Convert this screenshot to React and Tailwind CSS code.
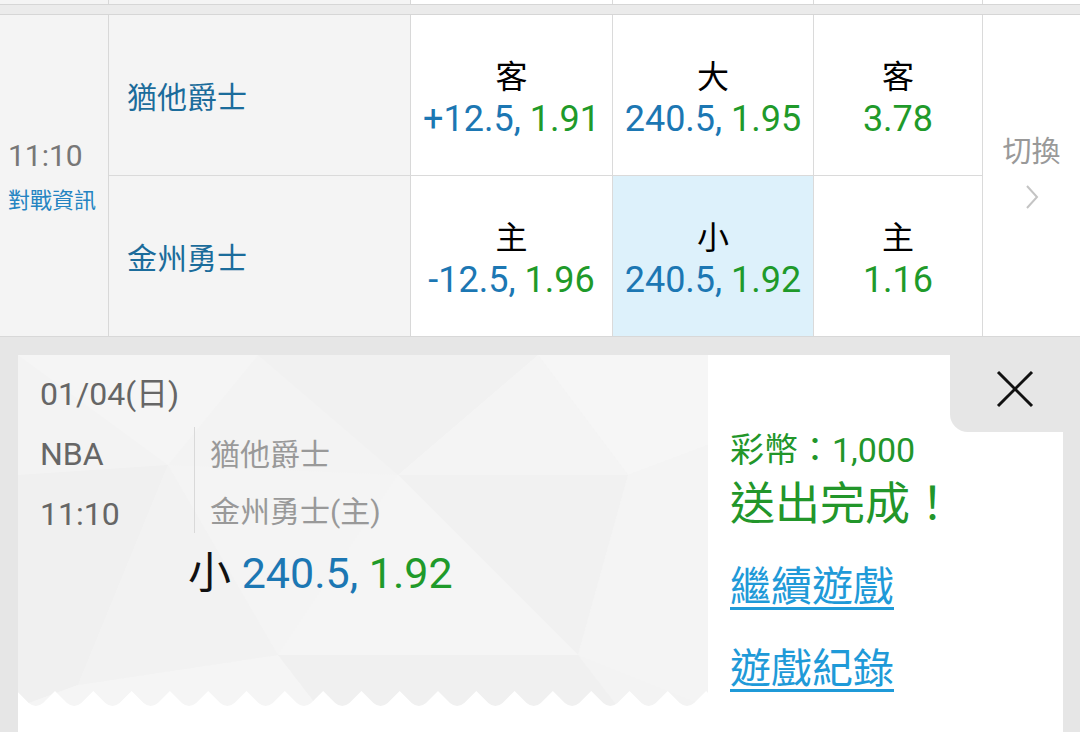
import React from "react";

function Chevron() {
  return (
    <svg width="14" height="26" viewBox="0 0 14 26" fill="none">
      <polyline points="2,2 12,13 2,24" stroke="#c4c4c4" strokeWidth="2" fill="none" />
    </svg>
  );
}

function CloseX() {
  return (
    <svg width="38" height="38" viewBox="0 0 38 38">
      <line x1="2" y1="2" x2="36" y2="36" stroke="#111" strokeWidth="3" />
      <line x1="36" y1="2" x2="2" y2="36" stroke="#111" strokeWidth="3" />
    </svg>
  );
}

function OddsCell({ label, a, b, w, hl }) {
  return (
    <div
      className={`${w} h-full flex flex-col items-center justify-center pt-[6px] border-r border-[#dadada] ${
        hl ? "bg-[#ddf1fb]" : "bg-white"
      }`}
    >
      <div className="text-[32px] leading-[42px] text-black">{label}</div>
      <div className="text-[36px] leading-[42px] whitespace-nowrap">
        {a && <span className="text-[#1c77b3]">{a}, </span>}
        <span className="text-[#1f9a2a]">{b}</span>
      </div>
    </div>
  );
}

function Zigzag() {
  let path = "M-10,16 ";
  for (let i = -1; i < 20; i++) {
    const p = 37 + i * 38.3;
    const next = p + 38.3;
    path += `L${p},0 L${p + 12},12 Q${p + 19.15},18 ${next - 12},12 `;
  }
  path += "L800,16 Z";
  return (
    <svg width="690" height="16" viewBox="0 0 690 16" className="block">
      <path d={path} fill="#ffffff" />
    </svg>
  );
}

function LowPoly() {
  return (
    <svg
      className="absolute inset-0"
      width="690"
      height="352"
      viewBox="0 0 690 352"
      preserveAspectRatio="none"
    >
      <rect width="690" height="352" fill="#f3f3f3" />
      <polygon points="0,0 240,0 150,110" fill="#f5f5f5" />
      <polygon points="240,0 520,0 380,120" fill="#f1f1f1" />
      <polygon points="520,0 690,0 690,90 610,120" fill="#f6f6f6" />
      <polygon points="380,120 520,0 610,120" fill="#f4f4f4" />
      <polygon points="0,120 150,110 60,330 0,352" fill="#f0f0f0" />
      <polygon points="150,110 380,120 260,300" fill="#f4f4f4" />
      <polygon points="380,120 610,120 560,300" fill="#f1f1f1" />
      <polygon points="610,120 690,90 690,352 560,300" fill="#f4f4f4" />
      <polygon points="60,330 260,300 300,352 0,352" fill="#f5f5f5" />
      <polygon points="260,300 560,300 600,352 300,352" fill="#f0f0f0" />
      <polygon points="150,110 260,300 60,330" fill="#f2f2f2" />
      <polygon points="380,120 560,300 260,300" fill="#f5f5f5" />
    </svg>
  );
}

export default function App() {
  return (
    <div className="w-[1080px] h-[732px] overflow-hidden bg-[#e6e6e6] font-['Roboto','Noto_Sans_CJK_TC',sans-serif]">
      {/* previous row remnant */}
      <div className="flex h-[4px]">
        <div className="w-[109px] bg-[#f4f4f4] border-r border-[#d8d8d8]" />
        <div className="w-[302px] bg-[#f4f4f4] border-r border-[#d8d8d8]" />
        <div className="w-[202px] bg-white border-r border-[#dadada]" />
        <div className="w-[201px] bg-white border-r border-[#dadada]" />
        <div className="w-[169px] bg-white border-r border-[#dadada]" />
        <div className="flex-1 bg-white" />
      </div>
      <div className="h-[11px] bg-[#ebebeb] border-y border-[#d6d6d6]" />

      {/* match row */}
      <div className="flex h-[322px] border-b border-[#d8d8d8]">
        <div className="w-[109px] bg-[#f4f4f4] border-r border-[#d8d8d8] flex flex-col justify-center pl-[8px] pt-[2px]">
          <div className="text-[30px] leading-[36px] text-[#777777]">11:10</div>
          <div className="text-[22px] leading-[30px] mt-[12px] text-[#2484c2]">對戰資訊</div>
        </div>
        <div className="flex flex-col">
          <div className="flex h-[161px] border-b border-[#dadada]">
            <div className="w-[302px] bg-[#f4f4f4] border-r border-[#d8d8d8] flex items-center pl-[18px] pt-[4px] text-[30px] text-[#1b6c9b]">
              猶他爵士
            </div>
            <OddsCell w="w-[202px]" label="客" a="+12.5" b="1.91" />
            <OddsCell w="w-[201px]" label="大" a="240.5" b="1.95" />
            <OddsCell w="w-[169px]" label="客" b="3.78" />
          </div>
          <div className="flex h-[160px]">
            <div className="w-[302px] bg-[#f4f4f4] border-r border-[#d8d8d8] flex items-center pl-[18px] pt-[4px] text-[30px] text-[#1b6c9b]">
              金州勇士
            </div>
            <OddsCell w="w-[202px]" label="主" a="-12.5" b="1.96" />
            <OddsCell w="w-[201px]" label="小" a="240.5" b="1.92" hl />
            <OddsCell w="w-[169px]" label="主" b="1.16" />
          </div>
        </div>
        <div className="flex-1 bg-white flex flex-col items-center justify-center pb-[8px]">
          <div className="text-[29px] leading-[36px] text-[#999999]">切換</div>
          <div className="mt-[14px]">
            <Chevron />
          </div>
        </div>
      </div>

      {/* bet slip */}
      <div className="pt-[18px] pl-[18px] pr-[17px]">
        <div className="flex h-[380px]">
          <div className="w-[690px] flex flex-col">
            <div className="relative h-[352px]">
              <LowPoly />
              <div className="relative pl-[22px] pt-[19px]">
                <div className="text-[32px] leading-[40px] text-[#666666]">01/04(日)</div>
                <div className="flex mt-[13px]">
                  <div className="w-[154px] pt-[7px] text-[32px] leading-[40px] text-[#666666]">
                    <div>NBA</div>
                    <div className="mt-[20px]">11:10</div>
                  </div>
                  <div className="w-px h-[106px] bg-[#d9d9d9]" />
                  <div className="pl-[15px] pt-[8px] text-[30px] leading-[40px] text-[#999999]">
                    <div>猶他爵士</div>
                    <div className="mt-[17px]">金州勇士(主)</div>
                  </div>
                </div>
                <div className="ml-[148px] mt-[14px] text-[43px] leading-[50px] whitespace-nowrap">
                  <span className="text-[#111111]">小 </span>
                  <span className="text-[#1c77b3]">240.5, </span>
                  <span className="text-[#1f9a2a]">1.92</span>
                </div>
              </div>
              <div className="absolute left-0 bottom-0">
                <Zigzag />
              </div>
            </div>
            <div className="flex-1 bg-white" />
          </div>
          <div className="flex-1 bg-white flex flex-col">
            <div className="flex justify-end">
              <div className="w-[113px] h-[77px] bg-[#e6e6e6] rounded-bl-[18px] flex items-center justify-center pl-[16px] pb-[10px]">
                <CloseX />
              </div>
            </div>
            <div className="pl-[22px]">
              <div className="text-[34px] leading-[36px] text-[#22962a] whitespace-nowrap">彩幣：1,000</div>
              <div className="text-[45px] leading-[50px] mt-[12px] text-[#22962a] whitespace-nowrap">送出完成！</div>
              <div className="text-[41px] leading-[50px] mt-[32px] text-[#1f9ad8] underline decoration-[3px] underline-offset-[6px] whitespace-nowrap">
                繼續遊戲
              </div>
              <div className="text-[41px] leading-[50px] mt-[32px] text-[#1f9ad8] underline decoration-[3px] underline-offset-[6px] whitespace-nowrap">
                遊戲紀錄
              </div>
            </div>
          </div>
        </div>
      </div>
    </div>
  );
}
